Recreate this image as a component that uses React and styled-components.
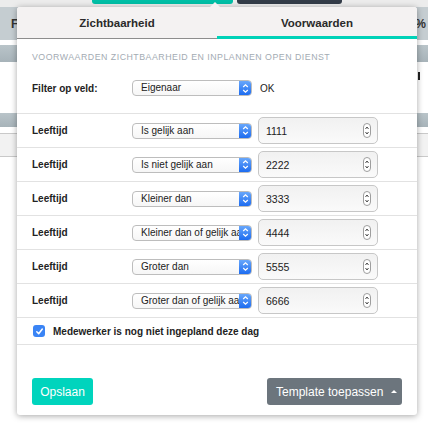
import React, { useState } from "react";
import styled, { createGlobalStyle } from "styled-components";

const GlobalStyle = createGlobalStyle`
  html, body {
    margin: 0;
    padding: 0;
    background: #ffffff;
    font-family: "Liberation Sans", Arial, sans-serif;
    color: #222;
  }
`;

const rules = [
  { op: "Is gelijk aan", value: "1111" },
  { op: "Is niet gelijk aan", value: "2222" },
  { op: "Kleiner dan", value: "3333" },
  { op: "Kleiner dan of gelijk aan", value: "4444" },
  { op: "Groter dan", value: "5555" },
  { op: "Groter dan of gelijk aan", value: "6666" },
];

function Stepper() {
  return (
    <StepperBox>
      <svg width="7" height="11" viewBox="0 0 7 11">
        <path d="M1.2 4 L3.5 1.8 L5.8 4" fill="none" stroke="#fff" strokeWidth="1.2" />
        <path d="M1.2 7 L3.5 9.2 L5.8 7" fill="none" stroke="#fff" strokeWidth="1.2" />
      </svg>
    </StepperBox>
  );
}

function Spinner() {
  return (
    <SpinnerBox>
      <svg width="6" height="13" viewBox="0 0 6 13">
        <path d="M1.5 5 L3 3 L4.5 5" fill="none" stroke="#333" strokeWidth="0.9" />
        <path d="M1.5 8 L3 10 L4.5 8" fill="none" stroke="#333" strokeWidth="0.9" />
      </svg>
    </SpinnerBox>
  );
}

function Select({ value }) {
  return (
    <SelectBox>
      <SelectText>{value}</SelectText>
      <Stepper />
    </SelectBox>
  );
}

export default function App() {
  const [tab, setTab] = useState(1);
  const [checked, setChecked] = useState(true);

  return (
    <Page>
      <GlobalStyle />
      <TopStrip>
        <TopButton $color="#00bfa6" $width={141} />
        <TopButton $color="#333c48" $width={105} />
      </TopStrip>
      <HeaderRow>
        <span>F</span>
        <span>%</span>
      </HeaderRow>
      <Gap $h={5} />
      <GrayBar $h={17} />
      <WhiteBlock $h={51}>
        <Mark />
      </WhiteBlock>
      <GrayBar $h={14} />
      <Gap $h={6} />
      <LightRow />

      <Popover>
        <Arrow />
        <Tabs>
          <Tab $active={tab === 0} onClick={() => setTab(0)}>
            Zichtbaarheid
          </Tab>
          <Tab $active={tab === 1} onClick={() => setTab(1)}>
            Voorwaarden
          </Tab>
        </Tabs>

        <SectionTitle>Voorwaarden zichtbaarheid en inplannen open dienst</SectionTitle>

        <FilterRow>
          <Label>Filter op veld:</Label>
          <Select value="Eigenaar" />
          <OkText>OK</OkText>
        </FilterRow>

        {rules.map((r) => (
          <RuleRow key={r.value}>
            <Label>Leeftijd</Label>
            <Select value={r.op} />
            <NumberBox>
              <span>{r.value}</span>
              <Spinner />
            </NumberBox>
          </RuleRow>
        ))}

        <CheckRow onClick={() => setChecked(!checked)}>
          <CheckBox $on={checked}>
            {checked && (
              <svg width="9" height="9" viewBox="0 0 9 9">
                <path d="M1.8 4.8 L3.7 6.8 L7.3 2" fill="none" stroke="#fff" strokeWidth="1.5" strokeLinecap="round" strokeLinejoin="round" />
              </svg>
            )}
          </CheckBox>
          <CheckLabel>Medewerker is nog niet ingepland deze dag</CheckLabel>
        </CheckRow>

        <Footer>
          <SaveButton>Opslaan</SaveButton>
          <TemplateButton>
            Template toepassen
            <Caret />
          </TemplateButton>
        </Footer>
      </Popover>
    </Page>
  );
}

const Page = styled.div`
  position: relative;
  width: 428px;
  height: 437px;
  overflow: hidden;
  background: #ffffff;
`;

const TopStrip = styled.div`
  height: 7px;
  background: #ececec;
  display: flex;
  gap: 4px;
  padding-left: 92px;
`;

const TopButton = styled.div`
  width: ${(p) => p.$width}px;
  height: 4px;
  background: ${(p) => p.$color};
  border-radius: 0 0 3px 3px;
`;

const HeaderRow = styled.div`
  height: 33px;
  background: #c5cdd1;
  display: flex;
  justify-content: space-between;
  align-items: center;
  padding: 0 2px 0 11px;
  font-size: 12px;
  font-weight: bold;
  color: #333;
`;

const Gap = styled.div`
  height: ${(p) => p.$h}px;
  background: #fff;
`;

const GrayBar = styled.div`
  height: ${(p) => p.$h}px;
  background: linear-gradient(#b9c4c9, #a7b3b9);
`;

const WhiteBlock = styled.div`
  height: ${(p) => p.$h}px;
  background: #fff;
  display: flex;
  justify-content: flex-end;
  padding-top: 10px;
  box-sizing: border-box;
`;

const Mark = styled.div`
  width: 2px;
  height: 8px;
  background: #222;
  margin-right: 8px;
`;

const LightRow = styled.div`
  height: 22px;
  background: #f2f2f2;
  border-top: 1px solid #c9c9c9;
  border-bottom: 1px solid #c9c9c9;
`;

const Popover = styled.div`
  position: absolute;
  top: 7px;
  left: 17px;
  width: 400px;
  height: 408px;
  background: #fff;
  border-radius: 3px;
  box-shadow: 0 1px 6px rgba(0, 0, 0, 0.35);
  display: flex;
  flex-direction: column;
`;

const Arrow = styled.div`
  position: absolute;
  top: -5px;
  left: 193px;
  width: 0;
  height: 0;
  border-left: 5px solid transparent;
  border-right: 5px solid transparent;
  border-bottom: 5px solid #f4f2f2;
`;

const Tabs = styled.div`
  display: flex;
  height: 32px;
  background: #f4f2f2;
  border-radius: 3px 3px 0 0;
`;

const Tab = styled.div`
  flex: 1;
  display: flex;
  align-items: center;
  justify-content: center;
  box-sizing: border-box;
  font-size: 11.5px;
  font-weight: bold;
  color: #2a2a2a;
  cursor: pointer;
  border-bottom: ${(p) => (p.$active ? "3px solid #00d2b8" : "1px solid #8d8d8d")};
  padding-top: ${(p) => (p.$active ? "2px" : "0")};
`;

const SectionTitle = styled.div`
  padding: 13px 15px 0;
  font-size: 8.8px;
  line-height: 10px;
  letter-spacing: 0.5px;
  text-transform: uppercase;
  color: #a3abb3;
`;

const Label = styled.div`
  width: 100px;
  font-size: 10px;
  font-weight: bold;
  color: #222;
`;

const FilterRow = styled.div`
  display: flex;
  align-items: center;
  height: 16px;
  padding: 18px 15px 17px;
  border-bottom: 1px solid #e2e2e2;
`;

const OkText = styled.span`
  margin-left: 8px;
  font-size: 10px;
  color: #222;
`;

const RuleRow = styled.div`
  display: flex;
  align-items: center;
  height: 33px;
  padding: 0 15px;
  border-bottom: 1px solid #e2e2e2;
`;

const SelectBox = styled.div`
  width: 120px;
  height: 16px;
  box-sizing: border-box;
  display: flex;
  align-items: stretch;
  border: 1px solid #bdbdbd;
  border-radius: 4px;
  background: linear-gradient(#ffffff, #f6f6f6);
  overflow: hidden;
`;

const SelectText = styled.div`
  flex: 1;
  min-width: 0;
  overflow: hidden;
  white-space: nowrap;
  font-size: 10px;
  line-height: 14px;
  padding-left: 8px;
  color: #222;
`;

const StepperBox = styled.div`
  width: 12px;
  flex: none;
  display: flex;
  align-items: center;
  justify-content: center;
  background: linear-gradient(#68a7fb, #1d6cf0);
`;

const NumberBox = styled.div`
  margin-left: 6px;
  width: 120px;
  height: 27px;
  box-sizing: border-box;
  display: flex;
  align-items: center;
  justify-content: space-between;
  padding: 0 6px 0 7px;
  border: 1px solid #c7c7c7;
  border-radius: 5px;
  background: linear-gradient(#f1f1f1, #fafafa);
  font-size: 10.5px;
  color: #222;
`;

const SpinnerBox = styled.div`
  width: 8px;
  height: 15px;
  box-sizing: border-box;
  border: 1px solid #9e9e9e;
  border-radius: 4px;
  background: #fff;
  display: flex;
  align-items: center;
  justify-content: center;
`;

const CheckRow = styled.div`
  display: flex;
  align-items: center;
  height: 26px;
  padding: 0 16px;
  border-bottom: 1px solid #e2e2e2;
  cursor: pointer;
`;

const CheckBox = styled.div`
  width: 12px;
  height: 12px;
  border-radius: 3px;
  background: ${(p) => (p.$on ? "#3a84f5" : "#fff")};
  border: ${(p) => (p.$on ? "none" : "1px solid #aaa")};
  display: flex;
  align-items: center;
  justify-content: center;
  margin-right: 8px;
`;

const CheckLabel = styled.span`
  font-size: 10px;
  font-weight: bold;
  color: #222;
`;

const Footer = styled.div`
  margin-top: auto;
  display: flex;
  justify-content: space-between;
  padding: 0 15px 10px;
`;

const BaseButton = styled.button`
  height: 27px;
  border: none;
  border-radius: 3px;
  color: #fff;
  font-family: "Liberation Sans", Arial, sans-serif;
  font-size: 12px;
  display: flex;
  align-items: center;
  cursor: pointer;
`;

const SaveButton = styled(BaseButton)`
  width: 61px;
  justify-content: center;
  background: #00d4bd;
`;

const TemplateButton = styled(BaseButton)`
  width: 135px;
  padding: 0 0 0 9px;
  background: #6c757d;
  font-family: "Liberation Sans", Arial, sans-serif;
`;

const Caret = styled.span`
  margin-left: 8px;
  width: 0;
  height: 0;
  border-left: 3px solid transparent;
  border-right: 3px solid transparent;
  border-bottom: 3px solid #fff;
`;
